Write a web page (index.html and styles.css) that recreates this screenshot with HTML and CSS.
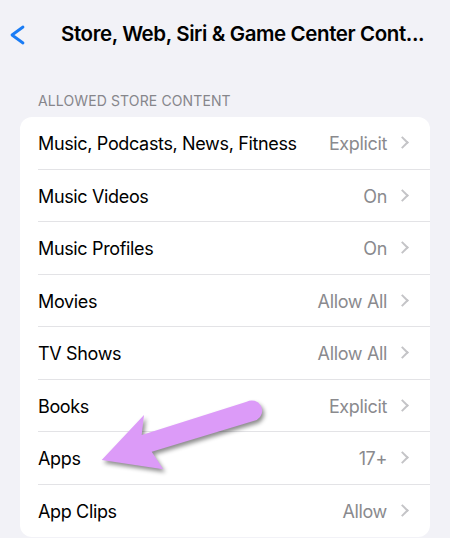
FILE: index.html
```html
<!DOCTYPE html>
<html>
<head>
<meta charset="utf-8">
<link rel="stylesheet" href="styles.css">
</head>
<body>
<div class="page">
  <header class="nav">
    <svg class="back" width="16" height="20" viewBox="0 0 16 20"><polyline points="13,2 2,10 13,18" fill="none" stroke="#1a7cf5" stroke-width="2.8" stroke-linecap="round" stroke-linejoin="round"/></svg>
    <div class="title">Store, Web, Siri &amp; Game Center Cont...</div>
  </header>
  <div class="section-label">ALLOWED STORE CONTENT</div>
  <div class="card">
    <div class="row"><div class="row-inner"><span class="label">Music, Podcasts, News, Fitness</span><span class="value">Explicit</span><span class="chev"></span></div></div>
    <div class="row"><div class="row-inner"><span class="label">Music Videos</span><span class="value">On</span><span class="chev"></span></div></div>
    <div class="row"><div class="row-inner"><span class="label">Music Profiles</span><span class="value">On</span><span class="chev"></span></div></div>
    <div class="row"><div class="row-inner"><span class="label">Movies</span><span class="value">Allow All</span><span class="chev"></span></div></div>
    <div class="row"><div class="row-inner"><span class="label">TV Shows</span><span class="value">Allow All</span><span class="chev"></span></div></div>
    <div class="row"><div class="row-inner"><span class="label">Books</span><span class="value">Explicit</span><span class="chev"></span></div></div>
    <div class="row"><div class="row-inner"><span class="label">Apps</span><span class="value">17+</span><span class="chev"></span></div></div>
    <div class="row"><div class="row-inner last"><span class="label">App Clips</span><span class="value">Allow</span><span class="chev"></span></div></div>
  </div>
  <svg class="arrow" width="450" height="538" viewBox="0 0 450 538">
    <path d="M101.7,460 L144,415 L141.7,435 L246.7,401.7 A10.2,10.2 0 0 1 256.7,420 L151.7,451.7 L163.3,469.3 Z" fill="#dc9bf8"/>
  </svg>
</div>
</body>
</html>
```
FILE: styles.css
```css
html, body {
  margin: 0;
  padding: 0;
  background: #f2f2f7;
}
body {
  font-family: "Inter", "Liberation Sans", sans-serif;
  color: #000;
  overflow: hidden;
}
.page {
  position: relative;
  width: 450px;
  height: 538px;
  overflow: hidden;
}
.nav {
  height: 66px;
  display: flex;
  align-items: center;
  padding-left: 10px;
}
.back {
  margin-top: 4px;
  flex: none;
}
.title {
  margin-left: 35px;
  font-size: 20.5px;
  font-weight: 600;
  letter-spacing: -0.4px;
  white-space: nowrap;
}
.section-label {
  margin-top: 27px;
  padding-left: 38px;
  font-size: 14px;
  line-height: 16px;
  color: #86868b;
  letter-spacing: 0.12px;
}
.card {
  margin: 8px 20px 0;
  background: #fff;
  border-radius: 12px;
  overflow: hidden;
}
.row {
  padding-left: 18px;
}
.row-inner {
  height: 52.5px;
  box-sizing: border-box;
  display: flex;
  align-items: center;
  padding-top: 2px;
  padding-right: 21px;
  border-bottom: 1px solid #e3e3e6;
  font-size: 18px;
  letter-spacing: -0.35px;
}
.row-inner.last {
  border-bottom: none;
}
.label {
  flex: 1;
  white-space: nowrap;
}
.value {
  color: #8a8a8e;
}
.chev {
  width: 7px;
  height: 7px;
  border-top: 2px solid #c4c4c7;
  border-right: 2px solid #c4c4c7;
  transform: rotate(45deg);
  margin-left: 11px;
  margin-right: 2px;
  margin-top: -2px;
}
.arrow {
  position: absolute;
  left: 0;
  top: 0;
  pointer-events: none;
  filter: drop-shadow(2px 3px 2px rgba(0,0,0,0.45));
}
```
